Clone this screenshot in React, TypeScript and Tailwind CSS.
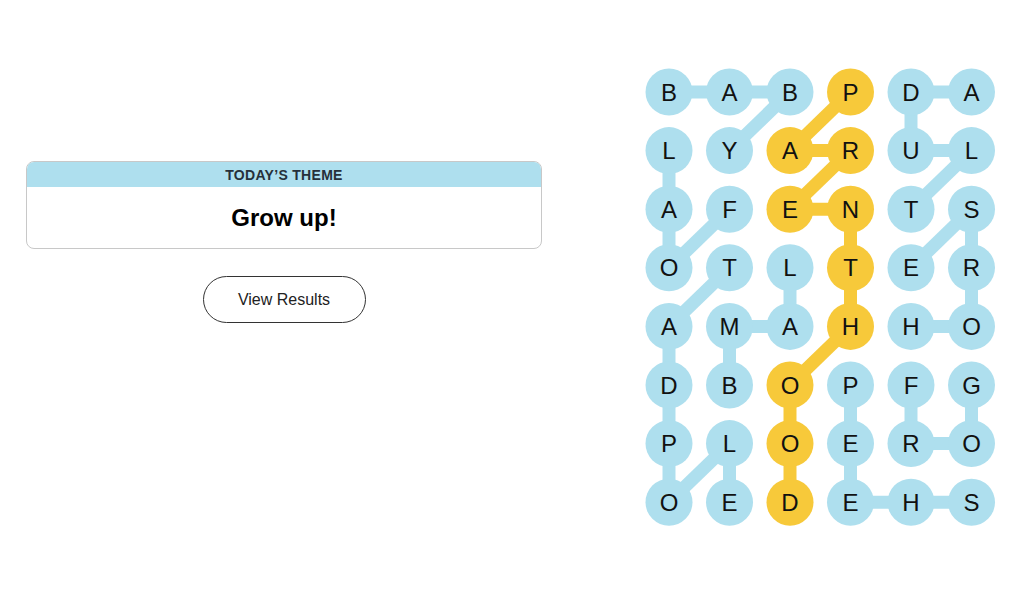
// App.tsx

const GRID = [
  'BABPDA',
  'LYARUL',
  'AFENTS',
  'OTLTER',
  'AMAHHO',
  'DBOPFG',
  'PLOERO',
  'OEDEHS',
];

// each word is a path of [row, col] cells
const WORDS: { cells: [number, number][]; spangram?: boolean }[] = [
  { cells: [[0, 0], [0, 1], [0, 2], [1, 1]] }, // BABY
  { cells: [[0, 5], [0, 4], [1, 4], [1, 5], [2, 4]] }, // ADULT
  { cells: [[2, 1], [3, 0], [2, 0], [1, 0]] }, // FOAL
  { cells: [[3, 1], [4, 0], [5, 0], [6, 0], [7, 0], [6, 1], [7, 1]] }, // TADPOLE
  { cells: [[3, 2], [4, 2], [4, 1], [5, 1]] }, // LAMB
  { cells: [[7, 5], [7, 4], [7, 3], [6, 3], [5, 3]] }, // SHEEP
  { cells: [[5, 4], [6, 4], [6, 5], [5, 5]] }, // FROG
  { cells: [[4, 4], [4, 5], [3, 5], [2, 5], [3, 4]] }, // HORSE
  {
    cells: [[0, 3], [1, 2], [1, 3], [2, 2], [2, 3], [3, 3], [4, 3], [5, 2], [6, 2], [7, 2]],
    spangram: true,
  }, // PARENTHOOD
];

const BLUE = '#aedfee';
const YELLOW = '#f7c93a';

const cx = (c: number) => 29 + c * 60.5;
const cy = (r: number) => 29 + r * 58.6;

const Board = () => {
  const colorOf: Record<string, string> = {};
  WORDS.forEach((w) => w.cells.forEach(([r, c]) => (colorOf[`${r}-${c}`] = w.spangram ? YELLOW : BLUE)));

  return (
    <svg width="360" height="470" viewBox="0 0 360 470" className="block">
      {WORDS.map((w, i) =>
        w.cells.slice(1).map(([r, c], j) => {
          const [pr, pc] = w.cells[j];
          return (
            <line
              key={`${i}-${j}`}
              x1={cx(pc)}
              y1={cy(pr)}
              x2={cx(c)}
              y2={cy(r)}
              stroke={w.spangram ? YELLOW : BLUE}
              strokeWidth={13}
            />
          );
        })
      )}
      {GRID.map((row, r) =>
        row.split('').map((ch, c) => (
          <g key={`${r}-${c}`}>
            <circle cx={cx(c)} cy={cy(r)} r={23.5} fill={colorOf[`${r}-${c}`]} />
            <text
              x={cx(c)}
              y={cy(r) + 8.6}
              textAnchor="middle"
              fontSize={24}
              fill="#111"
              style={{ fontFamily: '"Liberation Sans", Arial, sans-serif' }}
            >
              {ch}
            </text>
          </g>
        ))
      )}
    </svg>
  );
};

export default function App() {
  return (
    <div className="w-[1024px] h-[607px] bg-white flex items-start font-['Liberation_Sans',Arial,sans-serif]">
      <div className="ml-[26px] mt-[161px] w-[516px] flex flex-col items-center">
        <div className="w-full rounded-lg border border-[#c8c8c8] overflow-hidden">
          <div className="h-[25px] bg-[#aedfee] flex items-center justify-center text-[14px] font-semibold tracking-[0.3px] text-[#26303a] leading-none">
            TODAY’S THEME
          </div>
          <div className="h-[61px] flex items-center justify-center text-[24px] font-bold text-black">
            Grow up!
          </div>
        </div>
        <button className="mt-[27px] w-[163px] h-[47px] rounded-full border border-[#333] text-[16px] text-[#222] bg-white">
          View Results
        </button>
      </div>
      <div className="ml-[98px] mt-[63px]">
        <Board />
      </div>
    </div>
  );
}
